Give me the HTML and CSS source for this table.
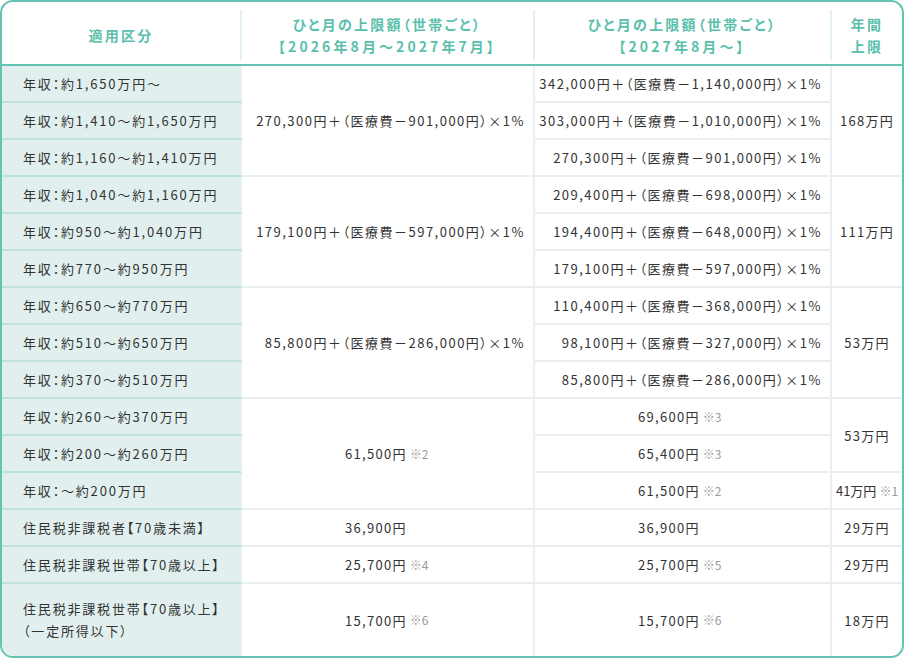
FILE: index.html
```html
<!DOCTYPE html>
<html lang="ja">
<head>
<meta charset="utf-8">
<title>高額療養費 上限額</title>
<link rel="stylesheet" href="styles.css">
</head>
<body>
<div class="table">
  <div class="th c1"><div class="th-in"><div>適用区分</div></div></div>
  <div class="th c2"><div class="th-in"><div>ひと月の上限額（世帯ごと）<br><span class="th-sub">【2026年8月〜2027年7月】</span></div></div></div>
  <div class="th c3"><div class="th-in"><div>ひと月の上限額（世帯ごと）<br><span class="th-sub">【2027年8月〜】</span></div></div></div>
  <div class="th c4"><div class="th-in last"><div>年間<br>上限</div></div></div>

  <div class="cat" style="grid-row:2">年収：約1,650万円〜</div>
  <div class="cat" style="grid-row:3">年収：約1,410〜約1,650万円</div>
  <div class="cat" style="grid-row:4">年収：約1,160〜約1,410万円</div>
  <div class="cat" style="grid-row:5">年収：約1,040〜約1,160万円</div>
  <div class="cat" style="grid-row:6">年収：約950〜約1,040万円</div>
  <div class="cat" style="grid-row:7">年収：約770〜約950万円</div>
  <div class="cat" style="grid-row:8">年収：約650〜約770万円</div>
  <div class="cat" style="grid-row:9">年収：約510〜約650万円</div>
  <div class="cat" style="grid-row:10">年収：約370〜約510万円</div>
  <div class="cat" style="grid-row:11">年収：約260〜約370万円</div>
  <div class="cat" style="grid-row:12">年収：約200〜約260万円</div>
  <div class="cat" style="grid-row:13">年収：〜約200万円</div>
  <div class="cat" style="grid-row:14">住民税非課税者【70歳未満】</div>
  <div class="cat" style="grid-row:15">住民税非課税世帯【70歳以上】</div>
  <div class="cat last-row" style="grid-row:16">住民税非課税世帯【70歳以上】<br>（一定所得以下）</div>

  <div class="td c2 formula" style="grid-row:2 / span 3">270,300円＋（医療費－901,000円）×1%</div>
  <div class="td c2 formula" style="grid-row:5 / span 3">179,100円＋（医療費－597,000円）×1%</div>
  <div class="td c2 formula" style="grid-row:8 / span 3">85,800円＋（医療費－286,000円）×1%</div>
  <div class="td c2 amount" style="grid-row:11 / span 3">61,500円<sup>※2</sup></div>
  <div class="td c2 amount" style="grid-row:14">36,900円</div>
  <div class="td c2 amount" style="grid-row:15">25,700円<sup>※4</sup></div>
  <div class="td c2 amount last-row" style="grid-row:16">15,700円<sup>※6</sup></div>

  <div class="td c3 formula" style="grid-row:2">342,000円＋（医療費－1,140,000円）×1%</div>
  <div class="td c3 formula" style="grid-row:3">303,000円＋（医療費－1,010,000円）×1%</div>
  <div class="td c3 formula" style="grid-row:4">270,300円＋（医療費－901,000円）×1%</div>
  <div class="td c3 formula" style="grid-row:5">209,400円＋（医療費－698,000円）×1%</div>
  <div class="td c3 formula" style="grid-row:6">194,400円＋（医療費－648,000円）×1%</div>
  <div class="td c3 formula" style="grid-row:7">179,100円＋（医療費－597,000円）×1%</div>
  <div class="td c3 formula" style="grid-row:8">110,400円＋（医療費－368,000円）×1%</div>
  <div class="td c3 formula" style="grid-row:9">98,100円＋（医療費－327,000円）×1%</div>
  <div class="td c3 formula" style="grid-row:10">85,800円＋（医療費－286,000円）×1%</div>
  <div class="td c3 amount" style="grid-row:11">69,600円<sup>※3</sup></div>
  <div class="td c3 amount" style="grid-row:12">65,400円<sup>※3</sup></div>
  <div class="td c3 amount" style="grid-row:13">61,500円<sup>※2</sup></div>
  <div class="td c3 amount" style="grid-row:14">36,900円</div>
  <div class="td c3 amount" style="grid-row:15">25,700円<sup>※5</sup></div>
  <div class="td c3 amount last-row" style="grid-row:16">15,700円<sup>※6</sup></div>

  <div class="td c4 center" style="grid-row:2 / span 3">168万円</div>
  <div class="td c4 center" style="grid-row:5 / span 3">111万円</div>
  <div class="td c4 center" style="grid-row:8 / span 3">53万円</div>
  <div class="td c4 center" style="grid-row:11 / span 2">53万円</div>
  <div class="td c4 center tight" style="grid-row:13">41万円<sup>※1</sup></div>
  <div class="td c4 center" style="grid-row:14">29万円</div>
  <div class="td c4 center" style="grid-row:15">29万円</div>
  <div class="td c4 center last-row" style="grid-row:16">18万円</div>
</div>
</body>
</html>
```
FILE: styles.css
```css
html, body {
  margin: 0;
  padding: 0;
  background: #ffffff;
}

body {
  font-family: "Noto Sans CJK JP", "Noto Sans", sans-serif;
  color: #333333;
  font-feature-settings: "palt";
}

.table {
  display: grid;
  grid-template-columns: 240px 293px 297px 70px;
  grid-template-rows: 64px repeat(14, 37px) 72px;
  width: 904px;
  height: 658px;
  box-sizing: border-box;
  border: 2px solid #63c4b1;
  border-radius: 13px;
  overflow: hidden;
  background: #ffffff;
}

.th {
  grid-row: 1;
  box-sizing: border-box;
  border-bottom: 2px solid #63c4b1;
  padding: 8px 0 4px;
  color: #5bbfac;
  font-weight: bold;
  font-size: 14px;
  line-height: 22px;
  letter-spacing: 0.16em;
  text-align: center;
}

.th-sub {
  letter-spacing: 0.22em;
}

.th.c1 { grid-column: 1; }
.th.c2 { grid-column: 2; }
.th.c3 { grid-column: 3; }
.th.c4 { grid-column: 4; }

.th-in {
  height: 100%;
  box-sizing: border-box;
  border-right: 2px solid #e3f0f0;
  display: flex;
  align-items: center;
  justify-content: center;
}

.th-in.last {
  border-right: none;
}

.cat {
  grid-column: 1;
  box-sizing: border-box;
  background: #e1f0ee;
  border-bottom: 2px solid #bde3db;
  border-right: 1px solid #e8f3f1;
  padding: 0 0 0 21px;
  font-size: 13px;
  letter-spacing: 0.14em;
  line-height: 22px;
  display: flex;
  align-items: center;
}

.td {
  box-sizing: border-box;
  border-bottom: 2px solid #e8eef1;
  border-right: 2px solid #e8eef1;
  font-size: 13px;
  letter-spacing: 0.1em;
  display: flex;
  align-items: center;
  white-space: nowrap;
}

.td.c2 { grid-column: 2; }
.td.c3 { grid-column: 3; }
.td.c4 { grid-column: 4; border-right: none; }

.td.tight {
  letter-spacing: 0;
}

.last-row {
  border-bottom: none;
}

.formula {
  justify-content: flex-end;
  padding-right: 8px;
  letter-spacing: 0.115em;
}

.amount {
  justify-content: flex-start;
  padding-left: 103px;
}

.center {
  justify-content: center;
}

sup {
  font-size: 12px;
  color: #9a9a9a;
  letter-spacing: 0;
  vertical-align: 9px;
  line-height: 0;
  margin-left: 3px;
}
```
